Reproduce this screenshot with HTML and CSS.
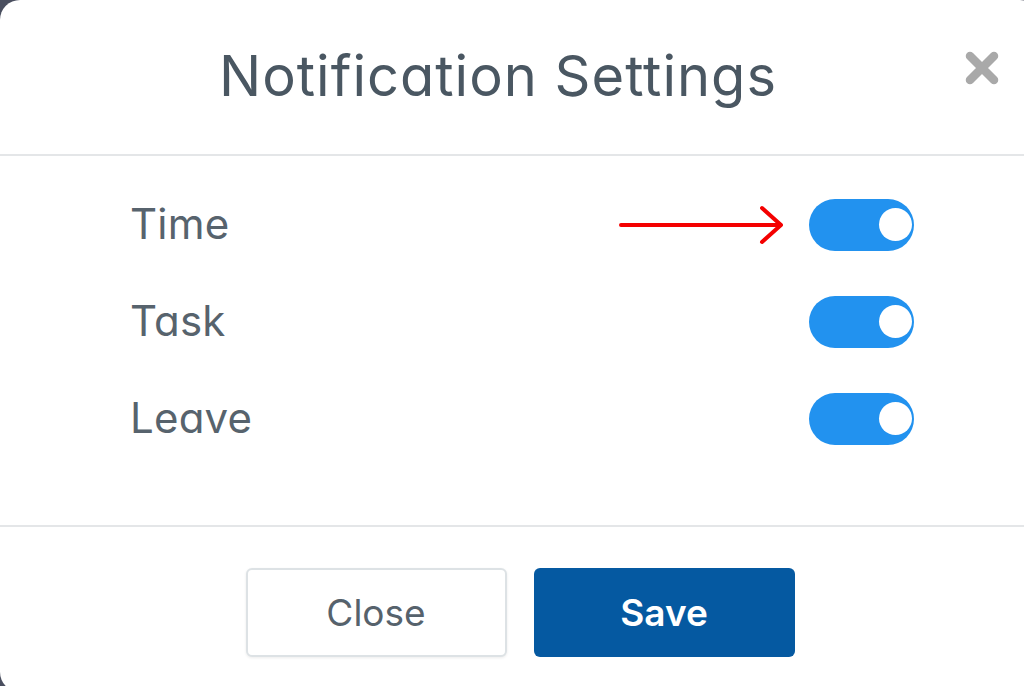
FILE: index.html
```html
<!DOCTYPE html>
<html lang="en">
<head>
<meta charset="utf-8">
<title>Notification Settings</title>
<link rel="stylesheet" href="styles.css">
</head>
<body>
<div class="modal">
  <div class="modal-header">
    <h1 class="modal-title">Notification Settings</h1>
    <button class="close-btn" aria-label="Close">
      <svg width="36" height="34" viewBox="0 0 36 34"><path d="M6 5 L30 29 M30 5 L6 29" stroke="#a9a9a9" stroke-width="8.5" stroke-linecap="round"/></svg>
    </button>
  </div>
  <div class="modal-body">
    <div class="setting-row">
      <span class="setting-label">Time</span>
      <span class="switch on"><span class="knob"></span></span>
      <svg class="pointer-arrow" width="170" height="44" viewBox="0 0 170 44"><path d="M2 22 H162 M143 5 L162 22 L143 39" fill="none" stroke="#f40000" stroke-width="4" stroke-linecap="round" stroke-linejoin="round"/></svg>
    </div>
    <div class="setting-row">
      <span class="setting-label">Task</span>
      <span class="switch on"><span class="knob"></span></span>
    </div>
    <div class="setting-row">
      <span class="setting-label">Leave</span>
      <span class="switch on"><span class="knob"></span></span>
    </div>
  </div>
  <div class="modal-footer">
    <button class="btn btn-light">Close</button>
    <button class="btn btn-primary">Save</button>
  </div>
</div>
</body>
</html>
```
FILE: styles.css
```css
html, body {
  margin: 0;
  padding: 0;
}
body {
  background: #4a4f5f;
  width: 1024px;
  height: 686px;
  overflow: hidden;
  font-family: "Inter", "Liberation Sans", sans-serif;
  font-feature-settings: "cv11" 1;
}
.modal {
  width: 1040px;
  height: 692px;
  background: #ffffff;
  border-radius: 20px;
  display: flex;
  flex-direction: column;
}
.modal-header {
  height: 154px;
  border-bottom: 2px solid #e4e6e8;
  display: flex;
  align-items: center;
  padding-right: 40px;
}
.modal-title {
  flex: 1;
  margin: 0;
  padding-left: 32px;
  text-align: center;
  font-size: 56px;
  font-weight: 400;
  color: #4a5762;
  letter-spacing: 1px;
  position: relative;
  top: -1px;
}
.close-btn {
  width: 36px;
  height: 34px;
  padding: 0;
  border: 0;
  background: none;
  display: flex;
  position: relative;
  top: -9px;
}
.modal-body {
  padding: 20px 126px 58px 130px;
  border-bottom: 2px solid #e4e6e8;
}
.setting-row {
  height: 97px;
  display: flex;
  align-items: center;
  justify-content: space-between;
  position: relative;
}
.setting-label {
  font-size: 42px;
  color: #57636d;
  letter-spacing: 0.2px;
  position: relative;
  top: -1px;
}
.switch {
  width: 105px;
  height: 52px;
  border-radius: 26px;
  background: #2292ef;
  display: flex;
  align-items: center;
  justify-content: flex-end;
  padding-right: 2px;
  box-sizing: border-box;
}
.knob {
  width: 33px;
  height: 33px;
  border-radius: 50%;
  background: #ffffff;
}
.pointer-arrow {
  position: absolute;
  left: 489px;
  top: 27px;
}
.modal-footer {
  display: flex;
  justify-content: center;
  gap: 27px;
  padding-top: 41px;
}
.btn {
  width: 261px;
  height: 89px;
  border-radius: 6px;
  font-family: inherit;
  font-size: 37px;
  cursor: pointer;
}
.btn-light {
  background: #ffffff;
  border: 2px solid #dde2e5;
  color: #56626c;
  box-shadow: 0 1px 3px rgba(0,0,0,0.08);
}
.btn-primary {
  background: #0559a1;
  border: 0;
  color: #ffffff;
  font-weight: 600;
}
```
